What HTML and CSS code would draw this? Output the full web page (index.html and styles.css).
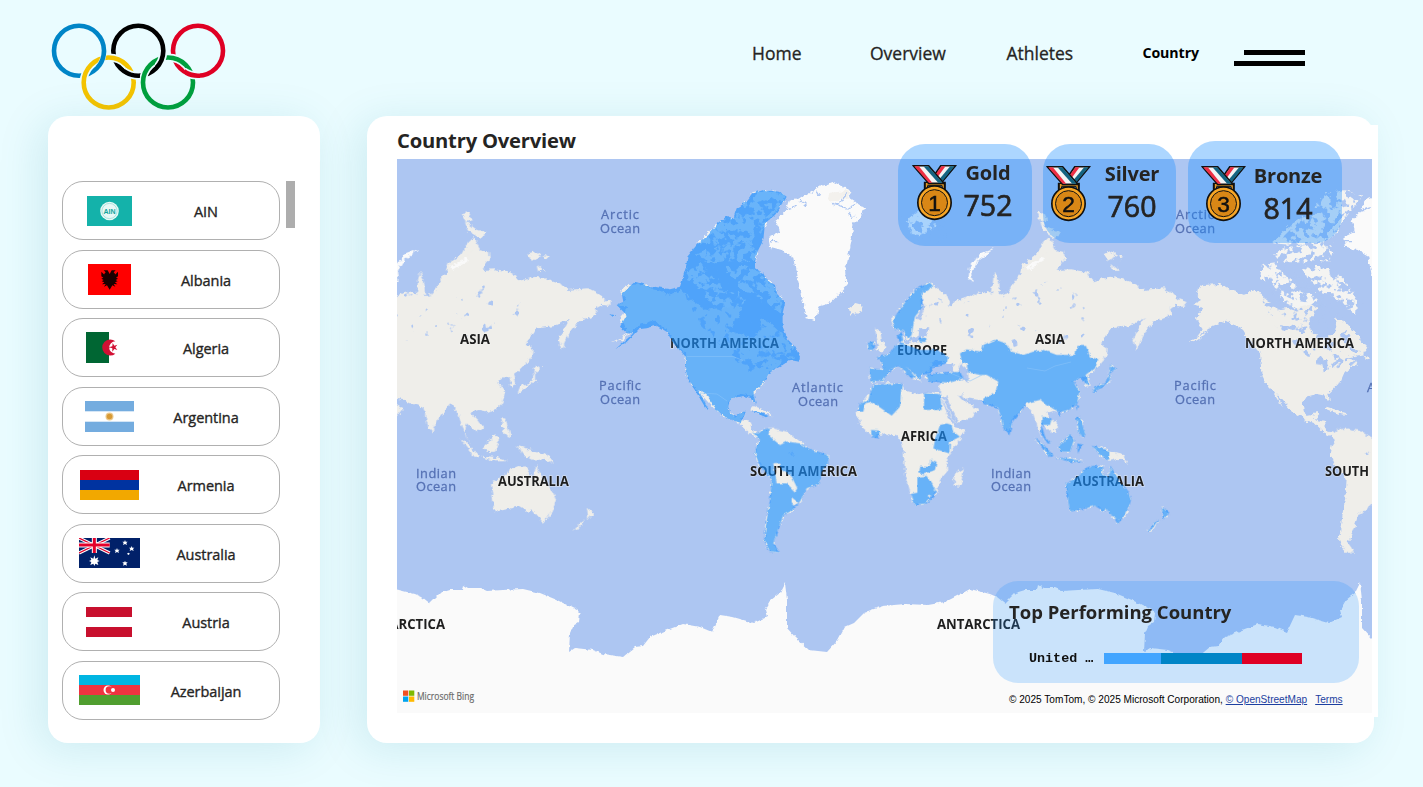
FILE: index.html
```html
<!DOCTYPE html>
<html lang="en">
<head>
<meta charset="utf-8">
<title>Country Overview</title>
<link rel="stylesheet" href="styles.css">
</head>
<body>
<header class="header">
  <svg class="logo" width="176" height="88" viewBox="51 22 176 88" fill="none" stroke-width="4.600">
    <defs>
      <clipPath id="over-blue"><path d="M95 51h15v15H95z"/></clipPath>
      <clipPath id="over-black"><path d="M125 68h15v15h-15zM155 51h15v15h-15z"/></clipPath>
      <clipPath id="over-red"><path d="M185 68h15v15h-15z"/></clipPath>
    </defs>
    <circle cx="79" cy="50.700" r="25" stroke="#0085c7"/>
    <circle cx="138.300" cy="50.700" r="25" stroke="#000"/>
    <circle cx="198" cy="50.700" r="25" stroke="#df0024"/>
    <g stroke="#eafcff" stroke-width="8"><circle cx="108.700" cy="82.500" r="25"/><circle cx="168" cy="82.500" r="25"/></g>
    <circle cx="108.700" cy="82.500" r="25" stroke="#f4c300"/>
    <circle cx="168" cy="82.500" r="25" stroke="#009f3d"/>
    <g clip-path="url(#over-blue)"><circle cx="79" cy="50.700" r="25" stroke="#eafcff" stroke-width="5.500"/><circle cx="79" cy="50.700" r="25" stroke="#0085c7"/></g>
    <g clip-path="url(#over-black)"><circle cx="138.300" cy="50.700" r="25" stroke="#eafcff" stroke-width="8"/><circle cx="138.300" cy="50.700" r="25" stroke="#000"/></g>
    <g clip-path="url(#over-red)"><circle cx="198" cy="50.700" r="25" stroke="#eafcff" stroke-width="8"/><circle cx="198" cy="50.700" r="25" stroke="#df0024"/></g>
  </svg>
  <nav class="nav">
    <a class="link home">Home</a>
    <a class="link overview">Overview</a>
    <a class="link athletes">Athletes</a>
    <a class="link current">Country</a>
    <span class="burger"><i class="bar short"></i><i class="bar"></i></span>
  </nav>
</header>

<main class="main">
  <aside class="panel sidebar">
    <div class="list">
      <div class="item"><span class="flag"><svg width="45" height="30" viewBox="0 0 45 30"><rect width="45" height="30" fill="#14b2aa"/><circle cx="22.500" cy="15" r="9.300" fill="#e8f8f6"/><circle cx="22.500" cy="15" r="7.600" fill="none" stroke="#7fd3cd" stroke-width=".6"/><text x="22.500" y="17.600" text-anchor="middle" class="ain">AIN</text></svg></span><span class="name">AIN</span></div>
      <div class="item"><span class="flag"><svg width="43" height="31" viewBox="0 0 129 93"><rect width="129" height="93" fill="#f00"/><path fill="#1a0000" d="M65 30l-6-11-12 0 6 6-5 6 4 4-12-12v14l6 4-6 3 7 4-6 4 8 3-7 6 11-1-5 8 9-4 3 5 5 8 5-8 3-5 9 4-5-8 11 1-7-6 8-3-6-4 7-4-6-3 6-4V23L78 35l4-4-5-6 6-6-12 0z"/></svg></span><span class="name">Albania</span></div>
      <div class="item"><span class="flag"><svg width="46" height="31" viewBox="0 0 138 93"><rect width="138" height="93" fill="#fff"/><rect width="69" height="93" fill="#063"/><path fill="#d21034" d="M88 28a24 24 0 1 0 0 37 18.500 18.500 0 1 1 0-37zM69 46l10-3 1-10 5 8 9-3-6 8 6 8-9-3-6 8v-10z"/></svg></span><span class="name">Algeria</span></div>
      <div class="item"><span class="flag"><svg width="49" height="31" viewBox="0 0 49 31"><rect width="49" height="31" fill="#74acdf"/><rect y="10.300" width="49" height="10.400" fill="#fff"/><circle cx="24.500" cy="15.500" r="4" fill="#ecc98d"/><circle cx="24.500" cy="15.500" r="2.800" fill="#d89a35"/></svg></span><span class="name">Argentina</span></div>
      <div class="item"><span class="flag"><svg width="59" height="30" viewBox="0 0 59 30"><rect width="59" height="30" fill="#d90012"/><rect y="10" width="59" height="20" fill="#0033a0"/><rect y="20" width="59" height="10" fill="#f2a800"/></svg></span><span class="name">Armenia</span></div>
      <div class="item"><span class="flag"><svg width="61" height="30" viewBox="0 0 183 90"><rect width="183" height="90" fill="#012169"/><g><path d="M0 0l92 45M92 0L0 45" stroke="#fff" stroke-width="10"/><path d="M0 0l92 45M92 0L0 45" stroke="#e4002b" stroke-width="4"/><path d="M46 0v45M0 21h92" stroke="#fff" stroke-width="15"/><path d="M46 0v45M0 21h92" stroke="#e4002b" stroke-width="9"/></g><path fill="#fff" d="M46 52l3 10 9-4-3 8 7 3-7 3 3 9-9-4-3 7-3-7-9 4 3-9-7-3 7-3-3-8 9 4zM114 30l2 5 6 0-4 4 2 6-6-3-6 3 2-6-4-4 6 0zM138 6l2 5 6 0-4 4 2 6-6-3-6 3 2-6-4-4 6 0zM158 24l2 5 6 0-4 4 2 6-6-3-6 3 2-6-4-4 6 0zM138 68l2 5 6 0-4 4 2 6-6-3-6 3 2-6-4-4 6 0zM148 44l5 3-5 4-4-4z"/></svg></span><span class="name">Australia</span></div>
      <div class="item"><span class="flag"><svg width="46" height="30" viewBox="0 0 46 30"><rect width="46" height="30" fill="#c8102e"/><rect y="10" width="46" height="10" fill="#fff"/></svg></span><span class="name">Austria</span></div>
      <div class="item"><span class="flag"><svg width="61" height="30" viewBox="0 0 61 30"><rect width="61" height="30" fill="#00b5e2"/><rect y="10" width="61" height="20" fill="#ef3340"/><rect y="20" width="61" height="10" fill="#509e2f"/><circle cx="29" cy="15" r="4.500" fill="#fff"/><circle cx="30.300" cy="15" r="3.700" fill="#ef3340"/><circle cx="34" cy="15" r="2" fill="#fff"/></svg></span><span class="name">Azerbaijan</span></div>
    </div>
    <div class="scrollbar"></div>
  </aside>

  <section class="panel content">
    <div class="backing">
      <h1 class="title">Country Overview</h1>
      <div class="mapbox">
        <svg class="map" width="975" height="554" viewBox="397 159 975 554">
          <defs>
            <filter id="rough" filterUnits="userSpaceOnUse" x="380" y="140" width="1010" height="590">
              <feTurbulence type="fractalNoise" baseFrequency=".2" numOctaves="3" seed="4" result="n"/>
              <feDisplacementMap in="SourceGraphic" in2="n" scale="6" xChannelSelector="R" yChannelSelector="G"/>
            </filter>
            <filter id="fine" filterUnits="userSpaceOnUse" x="380" y="140" width="1010" height="590">
              <feTurbulence type="fractalNoise" baseFrequency=".2" numOctaves="2" seed="9" result="n"/>
              <feDisplacementMap in="SourceGraphic" in2="n" scale="3.500" xChannelSelector="R" yChannelSelector="G"/>
            </filter>
            <!-- speckled lakes and straits -->
            <filter id="lakes" filterUnits="userSpaceOnUse" x="380" y="140" width="1010" height="590" color-interpolation-filters="sRGB">
              <feTurbulence type="fractalNoise" baseFrequency=".13" numOctaves="3" seed="12"/>
              <feColorMatrix values="0 0 0 0 .678  0 0 0 0 .776  0 0 0 0 .949  14 0 0 0 -6.900"/>
              <feComposite in2="SourceAlpha" operator="in"/>
            </filter>
            <filter id="ponds" filterUnits="userSpaceOnUse" x="380" y="140" width="1010" height="590" color-interpolation-filters="sRGB">
              <feTurbulence type="fractalNoise" baseFrequency=".12" numOctaves="3" seed="21"/>
              <feColorMatrix values="0 0 0 0 .678  0 0 0 0 .776  0 0 0 0 .949  14 0 0 0 -8"/>
              <feComposite in2="SourceAlpha" operator="in"/>
            </filter>
            <filter id="pools" filterUnits="userSpaceOnUse" x="380" y="140" width="1010" height="590" color-interpolation-filters="sRGB">
              <feTurbulence type="fractalNoise" baseFrequency=".09" numOctaves="3" seed="33"/>
              <feColorMatrix values="0 0 0 0 .678  0 0 0 0 .776  0 0 0 0 .949  14 0 0 0 -9.600"/>
              <feComposite in2="SourceAlpha" operator="in"/>
            </filter>
            <path id="arctic" transform="translate(505 240) scale(.33333)" d="M540 60L600 0 666-66 740-142 800-150 846-130 790-60 756 20 756 80 850 190 800 210 640 180 560 140z"/>
            <path id="svalbard" transform="translate(840 240) scale(.33333)" d="M180-70h140v80H180z"/>
            <path id="canada" transform="translate(505 240) scale(.33333)" d="M540 160L700 140 830 280 865 330 800 390 700 370 620 290 560 230z"/>
            <path id="steppe" transform="translate(840 240) scale(.33333)" d="M250 160L340 190 440 150 560 130 700 120 800 200 720 300 560 330 420 300 260 260z"/>
            <g id="world">
              <!-- North America -->
              <g transform="translate(505 240) scale(.33333)" fill="#efeeea">
                <path d="M345 155L370 135 420 132 450 150 490 165 530 150 560 180 600 210 640 205 690 190 710 200 700 230 685 260 700 280 745 292 770 268 765 238 790 243 830 283 865 323 850 343 800 353 830 363 825 378 790 398 775 432 745 462 750 487 740 468 710 462 680 470 668 490 672 515 690 530 712 515 718 525 705 540 735 545 733 558 745 575 765 583 758 590 730 578 700 548 680 542 640 517 590 462 606 502 575 450 545 410 540 340 505 300 485 268 440 242 400 257 350 292 368 268 345 235 370 205 340 195 365 180z"/>
                <path fill="#f4f4f2" d="M548 75l40-5 20 32 34 18 8 25-30 6-35-4-20-22-22-4zM600 155l40-5 60 10 20 20-10 10-60 15-40-20zM660 78l60 0 42 14 28 28 42 60-4 44-30-24-48-38-30-6-30-34zM570 40l60-20 100-10 30 30-10 24-90 0-60 6zM576 10l60-58 34-22 60 10 20 50-60 24-60 0zM690-80l50-60 60-10 44 20-52 66-32 56-4 26-40-10-20-40z"/>
                <path d="M740 500l60 20 5 6-30-5-38-14zM845 347l25 4-8 8zM320 310l30-16 34-20-28 26z"/>
                <path fill="#adc6f2" d="M715 360l26 4 6 24-16 6-4-22zM750 372l30-16 8 6-30 22zM690 232l74 0 2 34-22 24-44-12-14-20z"/>
              </g>
              <!-- Greenland and Iceland -->
              <g transform="translate(600 160) scale(.33333)">
                <path fill="#fafafa" d="M505 232l35-17-10-35 30-30 10-30 50-15 40-25 40-15 45 25 10 30 40 25-15 30-20 15-5 50-10 50-10 40 5 50-30 30-20 20-35 10-10 40-25-5-10-55-20-70-10-60-35-20-35-10z"/>
                <path fill="#f3f1ed" d="M690 95l50-5 10 22-60 14-10-10z"/>
                <path fill="#efeeea" d="M746 445l20-16 22 6-2 18-32 14z"/>
                <path stroke="#adc6f2" stroke-width="4" fill="none" d="M560 150l30-10M700 130l40 14M745 160l18 10M600 120l20 16M510 245l24 0M740 100l-20 30M650 92l10 16M770 130l-30 20"/>
              </g>
              <!-- South America -->
              <g transform="translate(720 410) scale(.33333)" fill="#efeeea">
                <path d="M90 62l25 8 15-12 30-3 40 10 45 30 10 15 25 10 45 15v25l-20 25-5 35-40 15-20 40-15 10-5 15-30 15-10 30-10 25-10 30 20 27-30-2-18-35 8-60 10-60 5-65-35-35-15-40 5-25 10-15zM60 35l30 0 3 20-18-2z"/>
                <path fill="#adc6f2" d="M208 128l18-2-10 12z"/>
              </g>
              <!-- Eurasia, Africa, Oceania -->
              <g transform="translate(840 240) scale(.33333)" fill="#efeeea">
                <path d="M92 425L90 385 130 390 125 365 110 352 150 340 165 318 185 310 180 285 190 290 200 310 235 300 260 290 268 264 236 268 232 290 210 296 200 300 188 271 165 270 156 241 198 181 228 146 268 129 318 165 330 185 323 205 343 186 398 166 428 152 450 160 456 160 460 110 468 95 478 130 480 165 500 162 520 132 540 102 550 70 575 55 610 30 630 8 645 30 672 36 675 60 650 90 690 88 740 95 760 124 810 110 840 115 885 130 905 150 970 145 1000 160 1016 178 1040 186 1030 198 1010 194 990 205 995 225 940 245 910 285 890 330 880 300 895 265 915 235 870 258 815 265 795 290 780 310 803 325 800 348 780 375 765 390 745 405 752 435 738 432 735 415 715 412 700 425 720 455 712 490 690 508 660 517 640 512 618 518 640 540 655 562 635 577 605 550 600 575 615 612 590 560 580 520 555 490 545 507 515 542 505 578 490 562 475 502 440 490 420 480 380 475 400 500 415 507 395 532 345 552 330 520 300 465 300 425 265 427 255 405 290 400 330 400 345 372 300 365 280 372 270 395 245 402 240 425 225 405 200 375 235 405 222 420 175 378 150 390 130 422z"/>
                <path d="M90 460l10-25 45-5 40-2 5 22 45 12 30-7 35 5 10 30 20 50 15 20 30 8-15 32-30 40-8 20 3 30-25 30-10 35-30 35-35 5-13-35-17-60-5-80-15-30-40-10-35 10-35-30-15-40 5-20z"/>
                <path d="M372 685l-12 55-20-5 5-35 20-12zM105 265l16 12 4 22 14 22-10 10-24 0 12-14-6-20zM84 308l20-4-4 26-15-2zM562 70l30-30 16-30 20-20 14 30zM590-80l22-4 10 24-20 6zM600-56l34 24 30 10-20 16-34-20zM790 42l24-6 18 12-30 14zM836 44l16 6-10 8zM815 72l24 20-20 0z"/>
                <path fill="#fafafa" d="M462 26l-46 34-20 34 5 32-16-10 5-35 28-38zM555 80l50-26 8 6-50 30zM200-60l30-24 70 0-14 44-44 26-26-4z"/>
                <path d="M678 730l37-20 15-20 30-12 30 2-5 20 20 12 8-34 12 22 17 28 24 30 7 24-13 36-15 20-25-5-20-25-10 5-25-15-40 10-35 7-5-27zM825 835l17 0-7 17zM965 800l22 20-17 18zM960 838l-26 34-8 0 19-24zM758 618l50 14 40 10 18 30-26-16-34 6-30-16zM585 595l26 20 30 32-12 4zM645 650l50 4 34 10-40 0zM655 620l35-38 12 18-12 35-25 0zM708 532l12 0 16 50-4 12-14-14zM810 375l18 10-18 15 0 25-30 20-22 13 7-18 30-10 13-30zM735 422l12 4-4 14-8-4z"/>
                <path fill="#adc6f2" d="M275 372l10-12 14 10 12-8 34 34-45 4-35 2zM362 370l22 20 2 36-20-10-12-22z"/>
                <path stroke="#adc6f2" stroke-width="9" fill="none" d="M312 468l30 62 10 26M362 465l18 20 22 4M246 180l2 24-14 36"/>
              </g>
            </g>
            <path id="ice" fill="#fafafa" d="M430 603l10-10 10-3 12 0 1-5 5 3 12 0 7 3 16-1 20-1 17 4 17 7 20 10 3 3-1 9-6 4-3 7-1 19 6-4 18 2 10 4 20 3 12-10 8-1 7-9 17-7 16-6 17 3 12 5 8-17 13 2 21 6 13-6-2-7 6-10 9-7 5-10 2 17 0 28 9 10 13 12 18 2 11-12 7-13 9-4 11-11 18-6 22-2 23 1 17-3 14-7 11-6 20 5 7 3 10 8v120H430z"/>
          </defs>
          <rect x="397" y="159" width="975" height="554" fill="#adc6f2"/>
          <g filter="url(#rough)"><use href="#world" x="-575"/><use href="#world"/><use href="#world" x="575"/></g>
          <g filter="url(#lakes)"><use href="#arctic"/><use href="#arctic" x="575"/><use href="#svalbard"/></g>
          <g filter="url(#ponds)"><use href="#canada"/><use href="#canada" x="575"/></g>
          <g filter="url(#pools)"><use href="#steppe"/><use href="#steppe" x="-575"/></g>
          <g filter="url(#fine)"><use href="#ice" x="-575"/><use href="#ice"/><use href="#ice" x="575"/></g>
          <g class="continent">
            <text x="460" y="343.500" textLength="30" lengthAdjust="spacingAndGlyphs">ASIA</text><text x="1035" y="343.500" textLength="30" lengthAdjust="spacingAndGlyphs">ASIA</text>
            <text x="670" y="348" textLength="109" lengthAdjust="spacingAndGlyphs">NORTH AMERICA</text><text x="1245" y="348" textLength="109" lengthAdjust="spacingAndGlyphs">NORTH AMERICA</text>
            <text x="897" y="354.500" textLength="50" lengthAdjust="spacingAndGlyphs">EUROPE</text><text x="901" y="440.500" textLength="46" lengthAdjust="spacingAndGlyphs">AFRICA</text>
            <text x="750" y="476" textLength="107" lengthAdjust="spacingAndGlyphs">SOUTH AMERICA</text><text x="1325" y="476" textLength="44" lengthAdjust="spacingAndGlyphs">SOUTH</text>
            <text x="498" y="485.500" textLength="71" lengthAdjust="spacingAndGlyphs">AUSTRALIA</text><text x="1073" y="485.500" textLength="71" lengthAdjust="spacingAndGlyphs">AUSTRALIA</text>
            <text x="362" y="629" textLength="83" lengthAdjust="spacingAndGlyphs">ANTARCTICA</text><text x="937" y="629" textLength="83" lengthAdjust="spacingAndGlyphs">ANTARCTICA</text>
          </g>
          <g class="ocean">
            <text x="601" y="219" textLength="38">Arctic</text><text x="600" y="232.500" textLength="40">Ocean</text>
            <text x="1176" y="219" textLength="38">Arctic</text><text x="1175" y="232.500" textLength="40">Ocean</text>
            <text x="599" y="390" textLength="42">Pacific</text><text x="600" y="403.500" textLength="40">Ocean</text>
            <text x="1174" y="390" textLength="42">Pacific</text><text x="1175" y="403.500" textLength="40">Ocean</text>
            <text x="792" y="392" textLength="51">Atlantic</text><text x="798" y="405.500" textLength="40">Ocean</text>
            <text x="1367" y="392" textLength="51">Atlantic</text>
            <text x="416" y="477.500" textLength="40">Indian</text><text x="416" y="491" textLength="40">Ocean</text>
            <text x="991" y="477.500" textLength="40">Indian</text><text x="991" y="491" textLength="40">Ocean</text>
          </g>
          <!-- countries with medals -->
          <g class="shade" filter="url(#fine)">
            <path transform="translate(600 160) scale(.33333)" d="M50 435l20-10-5-25 40-35 45 13 60 10 30-8 18-60 4-30 28-35 35-30 25-30 30-27 20 7 10-30 30-20 20-25 30-10 50 5 20 15-10 20-25 35-30 25-5 50-15 30-10 30 0 25 25 15 10 20 25 15 5 25 25 30-7 30 0 40 17 40 20 20 15 30-2 15-28-5-30 20-30 15-20 35-30 25 8 40-13-20-25-7-35 7-10 20 5 25 20 8 15-13 12 0-12 35-45-15-30-25-30-45-25-15 30 55-4 6-36-60-25-36-3-65-37-40-20-35-30-18-30 8-24 3-36 38-34 22 54-48-20 0-20-20 20-35zM450 750l32 8 24 10-8 4-28-12zM28 462l18 4-8 4z"/>
            <path transform="translate(720 410) scale(.33333)" fill-rule="evenodd" d="M95 65l20 5 15-12 20-3-5 20 35 30 20-10 40 5 15 10 25 10 45 15v25l-20 25-5 35-40 15-20 40-15 10-5 15-30 15-10 30-10 25-10 30 20 27-30-2-18-35 8-60 10-60 5-65-35-35-15-40 5-25 10-15zM160 160l20-2 5 22 30 20 17 35-7 10-25-25-30 0zM215 262l22 18-12 10-10-10z"/>
            <g transform="translate(840 240) scale(.33333)">
              <path d="M158 240l42-60 30-35 40-17 10 12-35 20 3 40-23 30-5 25-5 30-10 12-15-27-25 0zM92 425l-2-40 40 5-5-25-15-13 40-12 15-22 20-8 55 20 55 0 30 20-5 20-40 10-10 20-25 5-5 15-40-40 25 30-10 5-40-37-25 12-20 30zM170 290l15-15 5 25-8 10zM235 292l20-2 3 16-20 0zM84 308l20-4-4 26-15-2zM260 402l50-2 50-5 10 20-40 13-65-3z"/>
              <path d="M360 340L380 328 425 335 430 315 465 300 500 312 515 335 550 345 580 335 610 330 650 345 705 345 712 318 738 318 750 350 775 358 765 385 740 405 748 436 738 432 722 412 700 425 718 455 712 492 690 508 660 517 640 507 600 480 570 487 556 492 548 509 518 544 508 586 490 566 475 504 430 492 430 475 465 460 475 425 440 405 420 405 385 397 380 372 365 365z"/>
              <path d="M605 530l30 5-5 20-25 0 10 35 16 20-8 0-20-28zM585 592l26 23 30 32-12 4zM645 652l50 4 34 10-40 0zM655 620l35-38 12 18-12 35-25 0zM708 532l12 0 16 50-4 12-14-14zM758 618l50 14 0 28-30-16zM712 610l16 4-14 26zM810 375l18 10-18 15 0 25-30 20-22 13 7-18 30-10 13-30zM708 494l6 4-4 14zM655 515l8 6-8 6z"/>
              <path d="M90 460l10-25 85-5-5 70-25 27-60-42-20 5-5 25-18 0 8-25 25-10zM252 460l48 2 5 48-53 0zM300 555l20-5 15 5 5 20 20 15-30 15-2 35-48-15 5-25zM93 570l25 2 0 23-23-3zM240 680l30 0 0-20 20 5-5 25-35 13-12-3z"/>
              <path fill-rule="evenodd" d="M232 710l28-2 20 32 10 15-30 35-35 5-12-33 19-4zM264 766l8-2-1 8-7 1zM280 748l6 0-2 6z"/>
              <path d="M678 730l37-20 15-20 30-12 30 2-5 20 20 12 8-34 12 22 17 28 24 30 7 24-13 36-15 20-25-5-20-25-10 5-25-15-40 10-35 7-5-27zM825 835l17 0-7 17zM965 800l22 20-17 18zM960 838l-26 34-8 0 19-24z"/>
            </g>
          </g>
          <path d="M687 356.500h46l10 4M700 393l17 1 10 7M1027 368l18 3 10-5 16-4M950 373l20 8 12-6" fill="none" stroke="#8ac4fa" stroke-width=".7" opacity=".8"/>
          <g><path fill="#f25022" d="M403 690.500h5.300v5.300H403z"/><path fill="#7fba00" d="M409 690.500h5.300v5.300H409z"/><path fill="#00a4ef" d="M403 696.500h5.300v5.300H403z"/><path fill="#ffb900" d="M409 696.500h5.300v5.300H409z"/></g>
          <text class="bing" x="417" y="700" textLength="57" lengthAdjust="spacingAndGlyphs">Microsoft Bing</text>
        </svg>
        <p class="credit">© 2025 TomTom, © 2025 Microsoft Corporation, <a>© OpenStreetMap</a><a class="terms">Terms</a></p>
      </div>
    </div>

    <svg class="defs" width="0" height="0">
      <symbol id="medal" viewBox="0 0 134 168">
        <path d="M35 50h66v28H35z" fill="#111"/><path d="M41 54h54v20H41z" fill="#e59a23"/><path d="M46 62h44v20H46z" fill="#7ab3f5" stroke="#111" stroke-width="3"/>
        <path d="M86 2h44L86 55H50z" fill="#f4f4f4" stroke="#111" stroke-width="5"/><path d="M88 4h12L66 50H54z" fill="#ee2f45"/><path d="M114 4h13L88 52H74z" fill="#146482"/>
        <path d="M3 2h46l46 53H50z" fill="#f4f4f4" stroke="#111" stroke-width="5"/><path d="M6 4h14l40 49H50z" fill="#ee2f45"/><path d="M34 4h14l43 49H78z" fill="#146482"/>
        <circle cx="67" cy="113" r="50" fill="#f7a626" stroke="#111" stroke-width="5"/>
        <circle cx="67" cy="113" r="39" fill="#d98716" stroke="#111" stroke-width="3"/>
      </symbol>
    </svg>
    <div class="card gold"><svg class="medal" width="45" height="56" viewBox="0 0 134 168"><use href="#medal"/><text class="rank" x="67" y="138" text-anchor="middle">1</text></svg><div class="figures"><span class="label">Gold</span><span class="count">752</span></div></div>
    <div class="card silver"><svg class="medal" width="45" height="56" viewBox="0 0 134 168"><use href="#medal"/><text class="rank" x="67" y="138" text-anchor="middle">2</text></svg><div class="figures"><span class="label">Silver</span><span class="count">760</span></div></div>
    <div class="card bronze"><svg class="medal" width="45" height="56" viewBox="0 0 134 168"><use href="#medal"/><text class="rank" x="67" y="138" text-anchor="middle">3</text></svg><div class="figures"><span class="label">Bronze</span><span class="count">814</span></div></div>

    <div class="top">
      <h2 class="toptitle">Top Performing Country</h2>
      <div class="row"><span class="rowname">United …</span><span class="stack"><i class="seg a"></i><i class="seg b"></i><i class="seg c"></i></span></div>
    </div>
  </section>
</main>
</body>
</html>
```
FILE: styles.css
```css
* { box-sizing: border-box; }
body { margin: 0; width: 1423px; height: 787px; overflow: hidden; background: #eafcff; color: #252423; font-family: "Open Sans", "Noto Sans", sans-serif; }
.header { height: 116px; display: flex; justify-content: space-between; padding: 22px 118px 0 51px; }
.logo { display: block; }
.nav { display: flex; height: 64px; align-items: center; }
.link { white-space: nowrap; font-size: 17.5px; line-height: 24px; -webkit-text-stroke: .3px; margin-top: -2px; }
.home { width: 118px; }
.overview { width: 136.500px; }
.athletes { width: 136px; }
.current { width: 91.500px; font-size: 14.200px; font-weight: 700; color: #000; letter-spacing: -.1px; -webkit-text-stroke: 0; }
.burger { width: 71px; display: flex; flex-direction: column; align-items: flex-end; gap: 6px; padding-top: 8px; }
.bar { display: block; width: 71px; height: 5px; background: #000; }
.short { width: 61px; }
.main { display: flex; gap: 47px; padding-left: 48px; }
.panel { position: relative; height: 627px; background: #fff; border-radius: 20px; box-shadow: -8px 6px 44px rgba(0, 120, 150, .13); }
.sidebar { width: 272px; display: flex; gap: 5.500px; padding: 65px 0 0 14px; }
.list { width: 218px; display: flex; flex-direction: column; gap: 9.500px; }
.item { height: 59px; flex: none; border: 1px solid #b0b0b0; border-radius: 21px; display: flex; align-items: center; }
.flag { width: 92px; display: flex; justify-content: center; }
.flag svg { display: block; }
.name { width: 102px; text-align: center; font-size: 14.500px; letter-spacing: -.05px; -webkit-text-stroke: .35px; line-height: 20px; white-space: nowrap; padding-top: 3px; }
.ain { font: 700 7px "Liberation Sans", sans-serif; fill: #14a59d; }
.scrollbar { width: 9px; height: 47px; background: #adadad; }
.content { width: 1007px; padding-top: 9px; }
.backing { width: 1011px; height: 592px; background: linear-gradient(90deg, transparent 30px, #fff 30px); padding: 0 6px 0 30px; }
.title { margin: 0; height: 34px; font-size: 20.200px; line-height: 30px; font-weight: 700; letter-spacing: -.2px; white-space: nowrap; }
.mapbox { position: relative; width: 975px; height: 554px; }
.map { display: block; }
.continent { font: 700 13.500px "Open Sans", sans-serif; fill: #1e1e1e; stroke: #f5f5f3; stroke-width: 1.500px; stroke-opacity: .5; paint-order: stroke; }
.ocean { font: 12.800px "Open Sans", sans-serif; fill: #5571b4; stroke: #5571b4; stroke-width: .3px; }
.shade { fill: #1e90ff; opacity: .64; }
.bing { font: 10.500px "Open Sans", sans-serif; fill: #6a6a6a; stroke: #6a6a6a; stroke-width: .2px; }
.credit { position: absolute; left: 612px; bottom: 7px; margin: 0; font: 10.100px/13px "Liberation Sans", Arial, sans-serif; color: #000; white-space: nowrap; }
.credit a { color: #1c3fa0; text-decoration: underline; }
.credit .terms { margin-left: 8px; }
.defs { position: absolute; }
.card { position: absolute; display: flex; background: rgba(30, 144, 255, .37); border-radius: 27px; }
.gold { left: 531px; top: 28px; width: 134px; height: 102px; padding: 21px 0 0 14px; }
.silver { left: 676px; top: 28px; width: 133px; height: 99px; padding: 22px 0 0 3px; gap: 3px; }
.bronze { left: 821px; top: 25px; width: 154px; height: 102px; padding: 25px 0 0 13px; gap: 1px; }
.medal { display: block; flex: none; }
.rank { font: 68px "Liberation Sans", Arial, sans-serif; fill: #111; stroke: #111; stroke-width: 1.500px; }
.figures { width: 76px; display: flex; flex-direction: column; align-items: center; margin-top: -6px; }
.gold .figures { margin-left: -7px; }
.label { font-size: 20px; line-height: 28px; font-weight: 700; letter-spacing: -.2px; }
.count { font-size: 28.500px; line-height: 37px; -webkit-text-stroke: .7px; }
.bronze .figures { width: 82px; margin-top: -4px; }
.top { position: absolute; left: 626px; top: 465px; width: 366px; height: 102px; border-radius: 25px; background: rgba(30, 144, 255, .22); padding: 17px 0 0 16px; }
.toptitle { margin: 0; font-size: 18.500px; line-height: 28px; font-weight: 700; white-space: nowrap; }
.row { display: flex; align-items: center; margin: 25px 0 0 20px; height: 16px; }
.rowname { width: 75px; font: 700 13.400px/16px "Liberation Mono", monospace; color: #111; white-space: nowrap; }
.stack { display: flex; width: 198px; height: 11px; margin-top: -1px; }
.seg { display: block; }
.a { width: 57px; background: #42a5ff; }
.b { width: 81px; background: #0085c7; }
.c { width: 60px; background: #df0024; }
```
